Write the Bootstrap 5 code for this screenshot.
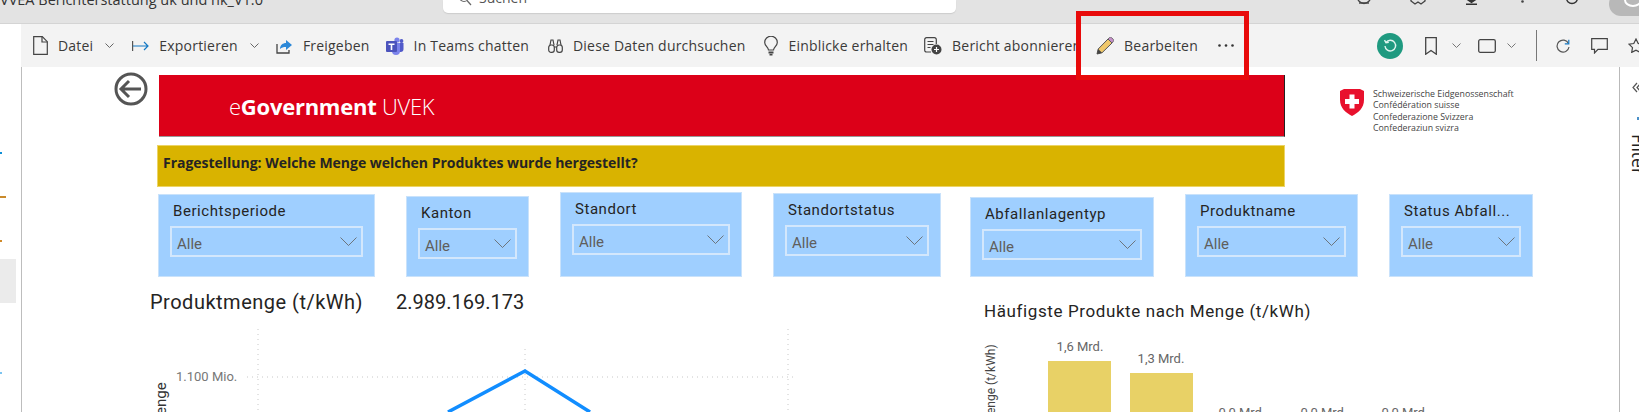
<!DOCTYPE html>
<html lang="de">
<head>
    <meta charset="UTF-8">
    <meta name="viewport" content="width=device-width, initial-scale=1.0">
    <title>eGovernment UVEK</title>
    <link href="https://cdn.jsdelivr.net/npm/bootstrap@5.3.0/dist/css/bootstrap.min.css" rel="stylesheet">
    <style>
        html, body { height: 412px; overflow: hidden; background: #fff; }
        body { font-family: "Open Sans", "Liberation Sans", sans-serif; position: relative; }

        /* browser chrome, cut off at the top */
        .chrome { height: 24px; background: #e3e3e3; border-bottom: 1px solid #d4d4d4; overflow: hidden; }
        .chrome-title { font-size: 14.5px; line-height: 20px; margin-top: -10px; color: #333; white-space: nowrap; width: 443px; }
        .chrome-search { width: 513px; height: 13px; background: #fff; border-radius: 0 0 5px 5px; box-shadow: 0 1px 1px #ccc; padding-left: 15px; gap: 7px; }
        .chrome-search span { font-size: 14px; line-height: 20px; margin-top: -12px; color: #555; }
        .chrome-search svg { margin-top: -3px; }
        .chrome-icons { margin-left: auto; gap: 38px; padding-right: 61px; }
        .chrome-avatar { position: absolute; left: 1609px; top: -8px; width: 48px; height: 24px; border-radius: 24px / 24px; background: #b8b8b8; overflow: hidden; }
        .chrome-avatar i { display: block; width: 18px; height: 14px; border: 2px solid #fff; border-radius: 50%; margin: 1px 0 0 15px; }

        /* power bi toolbar */
        .pbi-toolbar { height: 43px; margin-left: 21px; background: #f3f3f3; padding-left: 12px; color: #3b3a39; font-size: 14px; letter-spacing: .2px; white-space: nowrap; }
        .tool { gap: 10px; margin-right: 20px; }
        .tool .chev { margin-left: 2px; }
        .tool-m16 { margin-right: 16px; }
        .tool-m17 { margin-right: 17px; }
        .tool-m18 { margin-right: 18px; }
        .tool-m19 { margin-right: 19px; }
        .tool-clip { width: 124px; overflow: hidden; flex: none; }
        .tool-right { margin-left: auto; margin-right: -5px; }
        .right-dot { margin-right: 22px; }
        .right-mark { margin-right: 15px; }
        .right-rect { margin: 0 11px 0 17px; }
        .right-chev { margin-right: 20px; }
        .right-reload { margin-right: 21px; }
        .right-note { margin-right: 20px; }
        .tool-sep { width: 1px; height: 31px; background: #777; margin-right: 19px; }
        .green-dot { width: 26px; height: 26px; border-radius: 50%; background: #1f9a80; }
        .edit-mark { position: absolute; left: 1076px; top: 11px; width: 173px; height: 69px; border: 5px solid #e80a0a; z-index: 5; pointer-events: none; }

        /* page below the toolbar */
        .side-rail { width: 22px; height: 345px; margin-right: 1px; border-right: 1px solid #bdbdbd; flex: none; position: relative; }
        .rail-active { position: absolute; left: 0; top: 192px; width: 16px; height: 44px; background: #ebebeb; }
        .rail-tick { position: absolute; left: 0; height: 2px; width: 2px; }
        .tick-a { top: 85px; background: #0f8fd6; }
        .tick-b { top: 129px; width: 6px; background: #c98a2b; }
        .tick-c { top: 173px; background: #d08a2a; }
        .tick-d { top: 305px; background: #7cc4f0; }
        .report { position: relative; height: 345px; flex: 1 1 auto; overflow: hidden; }
        .filter-rail { width: 20px; height: 345px; border-left: 1px solid #b9b9b9; flex: none; overflow: hidden; position: relative; }
        .filter-word { position: absolute; left: 10px; top: 67px; font-size: 17.5px; line-height: 18px; color: #222; transform-origin: 0 0; transform: rotate(90deg) translate(0, -18px); }
        .filter-arrow { position: absolute; left: 12px; top: 15px; }
        .filter-tick { position: absolute; left: 17px; top: 50px; width: 2px; height: 3px; background: #4a90c8; }

        /* visuals on the report canvas */
        .back-btn { position: absolute; left: 91px; top: 5px; }
        .banner { position: absolute; left: 136px; top: 8px; width: 1126px; height: 62px; background: #dc0018; border-right: 1px solid #222; border-bottom: 1px solid #999; color: #fff; padding-left: 70px; font-size: 22px; letter-spacing: -.25px; line-height: 62px; font-weight: 300; }
        .banner b { font-weight: 700; }
        .question { position: absolute; left: 134px; top: 78px; width: 1128px; height: 42px; background: #d9b300; border: 1px solid #ecd465; padding: 6px 5px; font-weight: 700; font-size: 14px; letter-spacing: -.02px; color: #252423; }
        .confed { position: absolute; left: 1317px; top: 22px; gap: 9px; }
        .confed-text { font-size: 8.8px; line-height: 11.4px; color: #444; white-space: nowrap; }
        .slicer { position: absolute; background: #9fcfff; border: 1px solid #c9e2fb; padding: 0 11px; font-family: Roboto, "Liberation Sans", sans-serif; color: #252423; }
        .slicer-title { font-size: 15px; line-height: 20px; letter-spacing: .55px; padding: 6px 0 0 3px; height: 31px; white-space: nowrap; }
        .slicer-drop { height: 31px; border: 2px solid #d3e7fc; padding: 0 4px 0 5px; color: #605e5c; font-size: 15px; }
        .slicer-drop span { padding-top: 5px; }
        .sl-a { left: 135px; top: 127px; width: 217px; height: 83px; }
        .sl-b { left: 383px; top: 129px; width: 123px; height: 81px; }
        .sl-c { left: 537px; top: 125px; width: 182px; height: 85px; }
        .sl-d { left: 750px; top: 126px; width: 168px; height: 84px; }
        .sl-e { left: 947px; top: 130px; width: 184px; height: 80px; }
        .sl-f { left: 1162px; top: 127px; width: 173px; height: 83px; }
        .sl-g { left: 1366px; top: 127px; width: 144px; height: 83px; }
        .visual-head { position: absolute; font-family: Roboto, "Liberation Sans", sans-serif; color: #252423; white-space: nowrap; }
        .vh-left { left: 127px; top: 222px; font-size: 20px; line-height: 26px; letter-spacing: .5px; }
        .vh-total { left: 373px; top: 222px; font-size: 20px; line-height: 26px; }
        .vh-right { left: 961px; top: 232px; font-size: 17px; line-height: 24px; letter-spacing: .6px; }
        .chart-svg { position: absolute; left: 127px; top: 253px; }
        .chart-svg text { font-family: Roboto, "Liberation Sans", sans-serif; }
    </style>
</head>
<body>
    <!-- browser chrome -->
    <div class="chrome d-flex align-items-start">
        <div class="chrome-title">VVEA Berichterstattung uk und hk_V1.0</div>
        <div class="chrome-search d-flex align-items-start">
            <svg width="14" height="9" viewBox="0 5 14 9" fill="none" stroke="#666" stroke-width="1.2"><circle cx="6" cy="5" r="4.5"/><path d="M9 8.5 13 13"/></svg>
            <span>Suchen</span>
        </div>
        <div class="chrome-icons d-flex align-items-start">
            <svg width="16" height="5" viewBox="0 11 16 5" fill="none" stroke="#444" stroke-width="1.4"><circle cx="8" cy="8" r="6.5"/><path d="M3 14h10"/></svg>
            <svg width="16" height="5" viewBox="0 11 16 5" fill="none" stroke="#444" stroke-width="1.4"><path d="M1 9v3l4 3 3-2 3 2 4-3V9"/></svg>
            <svg width="15" height="5" viewBox="0 11 15 5" fill="none" stroke="#333" stroke-width="1.4"><path d="M7.5 2v10M2 15.2h11"/><path d="M4 11h7l-3.5 2.5z" fill="#333"/></svg>
            <svg class="mx-1" width="3" height="4" viewBox="0 0 3 4"><circle cx="1.5" cy="1.5" r="1.3" fill="#444"/></svg>
            <svg width="12" height="5" viewBox="0 11 12 5" fill="none" stroke="#333" stroke-width="1.4"><circle cx="6" cy="9" r="5.5"/></svg>
        </div>
        <div class="chrome-avatar"><i></i></div>
    </div>

    <!-- toolbar -->
    <div class="pbi-toolbar d-flex align-items-center">
        <div class="tool tool-m18 d-flex align-items-center">
            <svg width="15" height="19" viewBox="0 0 15 19" fill="none" stroke="#444" stroke-width="1.2"><path d="M.7.7h8.6l5 5v12.6H.7z"/><path d="M9 .7v5.3h5.3"/></svg>
            <span>Datei</span>
            <svg class="chev" width="9" height="5" viewBox="0 0 9 5" fill="none" stroke="#666"><path d="M.5.5l4 4 4-4"/></svg>
        </div>
        <div class="tool tool-m17 d-flex align-items-center">
            <svg width="17" height="10" viewBox="0 0 17 10" fill="none"><path d="M.6 0v10" stroke="#555" stroke-width="1.2"/><path d="M1 5h15M12 1l4 4-4 4" stroke="#1579c4" stroke-width="1.2"/></svg>
            <span>Exportieren</span>
            <svg class="chev" width="9" height="5" viewBox="0 0 9 5" fill="none" stroke="#666"><path d="M.5.5l4 4 4-4"/></svg>
        </div>
        <div class="tool tool-m16 d-flex align-items-center">
            <svg width="17" height="16" viewBox="0 0 17 16" fill="none"><path d="M1 6v9h12v-3" stroke="#444" stroke-width="1.3"/><path d="M4 11c0-4 3-6 6-6V2l6 5-6 5V9c-3 0-4 .5-6 2z" fill="#2b88d8"/></svg>
            <span>Freigeben</span>
        </div>
        <div class="tool tool-m19 d-flex align-items-center">
            <svg width="18" height="18" viewBox="0 0 18 18"><circle cx="11" cy="3" r="2.6" fill="#7b83eb"/><circle cx="15.5" cy="4" r="1.9" fill="#5059c9"/><path d="M11 6h6.5v6a3 3 0 0 1-3 3H11z" fill="#5059c9"/><path d="M6 6h8v8a4 4 0 0 1-8 0z" fill="#7b83eb"/><rect x="0" y="4" width="11" height="11" rx="1" fill="#4b53bc"/><path d="M2.5 6.5h6v1.4H6.3v5H4.7v-5H2.5z" fill="#fff"/></svg>
            <span>In Teams chatten</span>
        </div>
        <div class="tool tool-m19 d-flex align-items-center">
            <svg width="15" height="14" viewBox="0 0 15 14" fill="none" stroke="#444" stroke-width="1.2"><rect x=".7" y="6" width="5.6" height="7.3" rx="2.4"/><rect x="8.7" y="6" width="5.6" height="7.3" rx="2.4"/><path d="M2 6l1-5h2l1 5M9 6l1-5h2l1 5M6.3 8h2.4"/></svg>
            <span>Diese Daten durchsuchen</span>
        </div>
        <div class="tool tool-m16 d-flex align-items-center">
            <svg width="14" height="20" viewBox="0 0 14 20" fill="none" stroke="#444" stroke-width="1.2"><path d="M4.5 14c0-3-3.800-4-3.800-7.500a6.300 6.300 0 0 1 12.600 0C13.300 10 9.500 11 9.500 14z"/><path d="M4.500 16.500h5" stroke-width="2"/><path d="M5.500 18.700h3" stroke-width="1.600"/></svg>
            <span>Einblicke erhalten</span>
        </div>
        <div class="tool d-flex align-items-center">
            <svg width="18" height="18" viewBox="0 0 18 18" fill="none"><path d="M7 15H2.500A1.800 1.800 0 0 1 .7 13.200V2.500A1.800 1.800 0 0 1 2.500.7h8A1.800 1.800 0 0 1 12.300 2.500V7" stroke="#444" stroke-width="1.200"/><path d="M3.500 4.500h6M3.500 7.500h6M3.500 10.500h3" stroke="#444"/><circle cx="12.500" cy="12.500" r="5" fill="#444"/><path d="M12.500 10v5M10 12.500h5" stroke="#fff" stroke-width="1.200"/></svg>
            <span class="tool-clip">Bericht abonnieren</span>
        </div>
        <div class="tool d-flex align-items-center">
            <svg width="18" height="18" viewBox="0 0 18 18"><path d="M1 17l1.200-5L12 2l4 4-10 9.800z" fill="#f0c86a" stroke="#555" stroke-width="1"/><path d="M12 2l1.500-1.400a1.500 1.500 0 0 1 2 0l1.800 1.800a1.500 1.500 0 0 1 0 2L16 6z" fill="#c48fc8" stroke="#555" stroke-width=".8"/><path d="M1 17l1.200-5 3.800 3.800z" fill="#444"/></svg>
            <span>Bearbeiten</span>
        </div>
        <svg width="16" height="3" viewBox="0 0 16 3" fill="#333"><circle cx="1.500" cy="1.500" r="1.300"/><circle cx="8" cy="1.500" r="1.300"/><circle cx="14.500" cy="1.500" r="1.300"/></svg>

        <div class="tool-right d-flex align-items-center">
            <div class="green-dot d-flex align-items-center justify-content-center right-dot">
                <svg width="14" height="14" viewBox="0 0 14 14" fill="none" stroke="#dff5ef" stroke-width="1.400"><path d="M3 3.500a5.300 5.300 0 1 1-1 3.500"/><path d="M1.500 1.200 3 3.700l2.800-.5"/></svg>
            </div>
            <svg class="right-mark" width="12" height="18" viewBox="0 0 12 18" fill="none" stroke="#444" stroke-width="1.300"><path d="M.7.7h10.600v16.500L6 13.500.7 17.200z"/></svg>
            <svg width="9" height="5" viewBox="0 0 9 5" fill="none" stroke="#777"><path d="M.5.5l4 4 4-4"/></svg>
            <svg class="right-rect" width="18" height="14" viewBox="0 0 18 14" fill="none" stroke="#444" stroke-width="1.300"><rect x=".7" y=".7" width="16.600" height="12.600" rx="1.500"/></svg>
            <svg class="right-chev" width="9" height="5" viewBox="0 0 9 5" fill="none" stroke="#777"><path d="M.5.500l4 4 4-4"/></svg>
            <div class="tool-sep"></div>
            <svg class="right-reload" width="14" height="14" viewBox="0 0 14 14" fill="none" stroke="#555" stroke-width="1.200"><path d="M12.500 4.500A6 6 0 1 0 13 8"/><path d="M12.800 .8v4h-4" stroke="#1579c4"/></svg>
            <svg class="right-note" width="17" height="16" viewBox="0 0 17 16" fill="none" stroke="#444" stroke-width="1.200"><path d="M.7.700h15.600v10.600H7L3.500 15v-3.700H.7z"/></svg>
            <svg width="16" height="15" viewBox="0 0 16 15" fill="none" stroke="#444" stroke-width="1.200"><path d="M8 1l2.200 4.500 4.800.7-3.500 3.400.8 4.800L8 12.100 3.700 14.400l.8-4.800L1 6.200l4.800-.7z"/></svg>
        </div>
    </div>
    <div class="edit-mark"></div>

    <div class="d-flex">
        <div class="side-rail">
            <div class="rail-tick tick-a"></div>
            <div class="rail-tick tick-b"></div>
            <div class="rail-tick tick-c"></div>
            <div class="rail-active"></div>
            <div class="rail-tick tick-d"></div>
        </div>

        <div class="report">
            <svg class="back-btn" width="34" height="34" viewBox="0 0 34 34" fill="none" stroke="#555" stroke-width="3"><circle cx="17" cy="17" r="15"/><path d="M27 17H8M15 9l-8 8 8 8"/></svg>
            <div class="banner">e<b>Government</b> UVEK</div>
            <div class="question">Fragestellung: Welche Menge welchen Produktes wurde hergestellt?</div>
            <div class="confed d-flex align-items-start">
                <svg width="24" height="27" viewBox="0 0 24 27"><path d="M0 2 4 0h16l4 2v9c0 8-6 13-12 16C6 24 0 19 0 11z" fill="#e8112d"/><path d="M9.500 5.500h5v4.500h4.500v5h-4.500v4.500h-5V15H5v-5h4.500z" fill="#fff"/></svg>
                <div class="confed-text">Schweizerische Eidgenossenschaft<br>Confédération suisse<br>Confederazione Svizzera<br>Confederaziun svizra</div>
            </div>

            <div class="slicer sl-a">
                <div class="slicer-title">Berichtsperiode</div>
                <div class="slicer-drop d-flex align-items-center justify-content-between"><span>Alle</span><svg width="17" height="9" viewBox="0 0 17 9" fill="none" stroke="#605e5c" stroke-width=".8"><path d="M.5.500l8 8 8-8"/></svg></div>
            </div>
            <div class="slicer sl-b">
                <div class="slicer-title">Kanton</div>
                <div class="slicer-drop d-flex align-items-center justify-content-between"><span>Alle</span><svg width="17" height="9" viewBox="0 0 17 9" fill="none" stroke="#605e5c" stroke-width=".8"><path d="M.5.500l8 8 8-8"/></svg></div>
            </div>
            <div class="slicer sl-c">
                <div class="slicer-title">Standort</div>
                <div class="slicer-drop d-flex align-items-center justify-content-between"><span>Alle</span><svg width="17" height="9" viewBox="0 0 17 9" fill="none" stroke="#605e5c" stroke-width=".8"><path d="M.5.500l8 8 8-8"/></svg></div>
            </div>
            <div class="slicer sl-d">
                <div class="slicer-title">Standortstatus</div>
                <div class="slicer-drop d-flex align-items-center justify-content-between"><span>Alle</span><svg width="17" height="9" viewBox="0 0 17 9" fill="none" stroke="#605e5c" stroke-width=".8"><path d="M.5.500l8 8 8-8"/></svg></div>
            </div>
            <div class="slicer sl-e">
                <div class="slicer-title">Abfallanlagentyp</div>
                <div class="slicer-drop d-flex align-items-center justify-content-between"><span>Alle</span><svg width="17" height="9" viewBox="0 0 17 9" fill="none" stroke="#605e5c" stroke-width=".8"><path d="M.5.500l8 8 8-8"/></svg></div>
            </div>
            <div class="slicer sl-f">
                <div class="slicer-title">Produktname</div>
                <div class="slicer-drop d-flex align-items-center justify-content-between"><span>Alle</span><svg width="17" height="9" viewBox="0 0 17 9" fill="none" stroke="#605e5c" stroke-width=".8"><path d="M.5.500l8 8 8-8"/></svg></div>
            </div>
            <div class="slicer sl-g">
                <div class="slicer-title">Status Abfall...</div>
                <div class="slicer-drop d-flex align-items-center justify-content-between"><span>Alle</span><svg width="17" height="9" viewBox="0 0 17 9" fill="none" stroke="#605e5c" stroke-width=".8"><path d="M.5.500l8 8 8-8"/></svg></div>
            </div>

            <div class="visual-head vh-left">Produktmenge (t/kWh)</div>
            <div class="visual-head vh-total">2.989.169.173</div>
            <div class="visual-head vh-right">Häufigste Produkte nach Menge (t/kWh)</div>

            <!-- both charts share one svg, origin is x=150 y=320 of the page -->
            <svg class="chart-svg" width="1300" height="92" viewBox="0 0 1300 92">
                <g stroke="#c8c8c8" stroke-dasharray="1 4" fill="none">
                    <path d="M108 9V92M375 29V92M638 9V92M97 57H647"/>
                </g>
                <text x="26" y="61" font-size="13" fill="#777">1.100 Mio.</text>
                <text transform="translate(16 92) rotate(-90)" x="-3" y="0" font-size="15" fill="#333">enge</text>
                <polyline points="298,92 375,51 440,92" fill="none" stroke="#118dff" stroke-width="3.500"/>

                <text transform="translate(845 92) rotate(-90)" x="-2" y="0" font-size="12" fill="#444">enge (t/kWh)</text>
                <rect x="898" y="41" width="63" height="60" fill="#e8d166"/>
                <rect x="980" y="53" width="63" height="50" fill="#e8d166"/>
                <g font-size="13" fill="#666" text-anchor="middle">
                    <text x="930" y="31">1,6 Mrd.</text>
                    <text x="1011" y="43">1,3 Mrd.</text>
                    <text x="1092" y="97">0,0 Mrd.</text>
                    <text x="1174" y="97">0,0 Mrd.</text>
                    <text x="1255" y="97">0,0 Mrd.</text>
                </g>
            </svg>
        </div>

        <div class="filter-rail">
            <svg class="filter-arrow" width="9" height="11" viewBox="0 0 9 11" fill="none" stroke="#555" stroke-width="1.200"><path d="M5 1 1 5.500 5 10M9 1 5 5.500 9 10"/></svg>
            <div class="filter-tick"></div>
            <div class="filter-word">Filter</div>
        </div>
    </div>

    <script src="https://cdn.jsdelivr.net/npm/bootstrap@5.3.0/dist/js/bootstrap.bundle.min.js"></script>
</body>
</html>
